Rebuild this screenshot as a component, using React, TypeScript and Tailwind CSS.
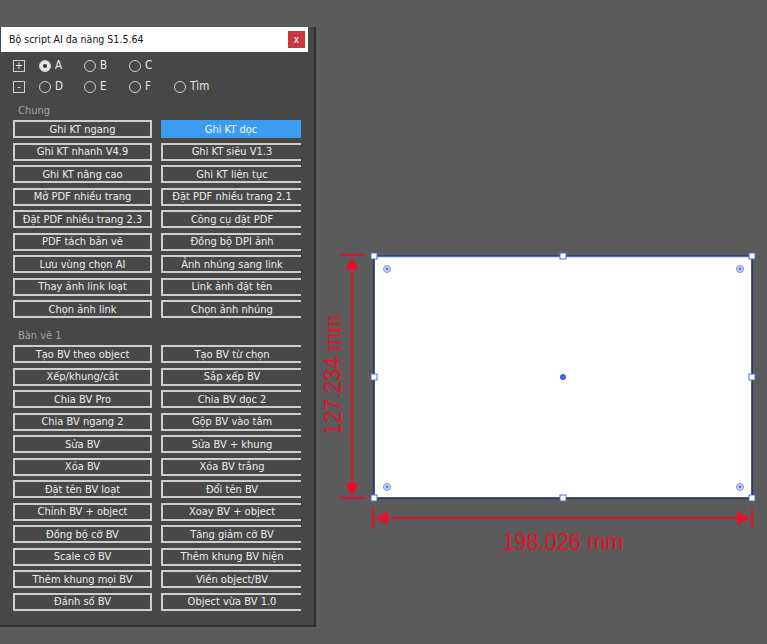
import React from 'react';

const chung = [
  ['Ghi KT ngang', 'Ghi KT dọc'],
  ['Ghi KT nhanh V4.9', 'Ghi KT siêu V1.3'],
  ['Ghi KT nâng cao', 'Ghi KT liên tục'],
  ['Mở PDF nhiều trang', 'Đặt PDF nhiều trang 2.1'],
  ['Đặt PDF nhiều trang 2.3', 'Công cụ đặt PDF'],
  ['PDF tách bản vẽ', 'Đồng bộ DPI ảnh'],
  ['Lưu vùng chọn AI', 'Ảnh nhúng sang link'],
  ['Thay ảnh link loạt', 'Link ảnh đặt tên'],
  ['Chọn ảnh link', 'Chọn ảnh nhúng'],
];

const banVe = [
  ['Tạo BV theo object', 'Tạo BV từ chọn'],
  ['Xếp/khung/cắt', 'Sắp xếp BV'],
  ['Chia BV Pro', 'Chia BV dọc 2'],
  ['Chia BV ngang 2', 'Gộp BV vào tâm'],
  ['Sửa BV', 'Sửa BV + khung'],
  ['Xóa BV', 'Xóa BV trắng'],
  ['Đặt tên BV loạt', 'Đổi tên BV'],
  ['Chỉnh BV + object', 'Xoay BV + object'],
  ['Đồng bộ cỡ BV', 'Tăng giảm cỡ BV'],
  ['Scale cỡ BV', 'Thêm khung BV hiện'],
  ['Thêm khung mọi BV', 'Viền object/BV'],
  ['Đánh số BV', 'Object vừa BV 1.0'],
];

const Radio = ({ label, checked }: { label: string; checked?: boolean }) => (
  <div className="flex items-center gap-[4px] w-[45px]">
    <span
      className={`w-[12px] h-[12px] rounded-full border border-[#cfcfcf] flex items-center justify-center ${
        checked ? 'bg-[#e6e6e6]' : ''
      }`}
    >
      {checked && <span className="w-[4px] h-[4px] rounded-full bg-[#333]" />}
    </span>
    <span className="text-[11.5px] leading-none text-[#e8e8e8]">{label}</span>
  </div>
);

const Btn = ({ label, active, right }: { label: string; active?: boolean; right?: boolean }) => (
  <div
    className={`h-[18px] flex items-center justify-center text-[11px] leading-none whitespace-nowrap ${
      active
        ? 'bg-[#3c9cf2] text-[#f4f8ff]'
        : `border-2 border-[#cdcdcd] bg-[#484848] text-[#ececec] ${right ? 'border-r-0' : ''}`
    }`}
  >
    {label}
  </div>
);

const Section = ({ title, rows, activeIdx }: { title: string; rows: string[][]; activeIdx?: number }) => (
  <div>
    <div className="text-[11px] leading-none text-[#a3a3a3] pl-[5px] h-[14px] flex items-center">{title}</div>
    <div className="grid grid-cols-[139px_140px] gap-x-[9px] gap-y-[4.5px] mt-[3px]">
      {rows.map(([a, b], i) => (
        <React.Fragment key={i}>
          <Btn label={a} />
          <Btn label={b} right active={i === activeIdx && activeIdx !== undefined} />
        </React.Fragment>
      ))}
    </div>
  </div>
);

const Canvas = () => {
  const red = '#e2132a';
  const blue = '#4a6fd6';
  const handles = [
    [374, 256], [563, 256], [752, 256],
    [374, 377], [752, 377],
    [374, 498], [563, 498], [752, 498],
  ];
  const points = [
    [387, 269], [740, 269], [387, 487], [740, 487],
  ];
  return (
    <svg className="absolute left-0 top-0" width={767} height={644} viewBox="0 0 767 644">
      <rect x={374} y={256} width={378} height={242} fill="#ffffff" stroke="#25305e" strokeWidth={1.6} />
      <line x1={374} y1={256.5} x2={752} y2={256.5} stroke={blue} strokeWidth={1.6} />
      {points.map(([x, y], i) => (
        <g key={i}>
          <circle cx={x} cy={y} r={3.5} fill="#d3daf4" stroke="#7d8fd6" strokeWidth={1} />
          <circle cx={x} cy={y} r={1.4} fill="#5d74cf" />
        </g>
      ))}
      <circle cx={563} cy={377} r={3} fill="#3e68de" />
      {handles.map(([x, y], i) => (
        <rect key={i} x={x - 3} y={y - 3} width={6} height={6} fill="#ffffff" stroke={blue} strokeWidth={1} />
      ))}

      {/* vertical dimension */}
      <line x1={340} y1={255} x2={365} y2={255} stroke={red} strokeWidth={2} />
      <line x1={340} y1={498} x2={365} y2={498} stroke={red} strokeWidth={2} />
      <line x1={352} y1={262} x2={352} y2={492} stroke={red} strokeWidth={2} />
      <polygon points="352,257 345,270 359,270" fill={red} />
      <polygon points="352,496 345,483 359,483" fill={red} />
      <text
        x={0}
        y={0}
        transform="translate(341 375) rotate(-90)"
        textAnchor="middle"
        fill={red}
        fontSize={24}
        textLength={120}
        lengthAdjust="spacingAndGlyphs"
        fontFamily="'Liberation Sans', Arial, sans-serif"
      >
        127.234 mm
      </text>

      {/* horizontal dimension */}
      <line x1={373} y1={508} x2={373} y2={529} stroke={red} strokeWidth={2} />
      <line x1={752} y1={508} x2={752} y2={529} stroke={red} strokeWidth={2} />
      <line x1={380} y1={518} x2={745} y2={518} stroke={red} strokeWidth={2} />
      <polygon points="375,518 388,511 388,525" fill={red} />
      <polygon points="750,518 737,511 737,525" fill={red} />
      <text
        x={563}
        y={550}
        textAnchor="middle"
        fill={red}
        fontSize={24}
        textLength={121}
        lengthAdjust="spacingAndGlyphs"
        fontFamily="'Liberation Sans', Arial, sans-serif"
      >
        198.026 mm
      </text>
    </svg>
  );
};

export default function App() {
  return (
    <div className="relative w-[767px] h-[644px] bg-[#5b5b5b] overflow-hidden">
      <Canvas />
      <div
        className="relative pt-[27px]"
        style={{ fontFamily: "'DejaVu Sans Condensed', 'DejaVu Sans', sans-serif", fontStretch: 'condensed' }}
      >
        <div className="w-[316px] h-[600px] bg-[#474747] border-r-2 border-b-2 border-[#303030] flex flex-col">
          <div className="w-[307px] h-[25px] ml-[1px] bg-white flex items-center justify-between pl-[8px] pr-[3px]">
            <span className="text-[10.5px] text-[#111]">Bộ script AI đa năng S1.5.64</span>
            <span className="w-[17px] h-[17px] bg-[#c8383c] flex items-center justify-center text-[10px] leading-none text-white">
              x
            </span>
          </div>
          <div className="pl-[13px] pt-[7px]">
            <div className="flex flex-col gap-[8px]">
              <div className="flex items-center h-[13px]">
                <span className="w-[12px] h-[12px] border border-[#d0d0d0] flex items-center justify-center text-[11px] leading-none text-[#e6e6e6] mr-[14px]">
                  +
                </span>
                <Radio label="A" checked />
                <Radio label="B" />
                <Radio label="C" />
              </div>
              <div className="flex items-center h-[13px]">
                <span className="w-[12px] h-[12px] border border-[#d0d0d0] flex items-center justify-center text-[11px] leading-none text-[#e6e6e6] mr-[14px]">
                  -
                </span>
                <Radio label="D" />
                <Radio label="E" />
                <Radio label="F" />
                <Radio label="Tìm" />
              </div>
            </div>
            <div className="mt-[10px]">
              <Section title="Chung" rows={chung} activeIdx={0} />
            </div>
            <div className="mt-[10px]">
              <Section title="Bàn vẽ 1" rows={banVe} />
            </div>
          </div>
        </div>
      </div>
    </div>
  );
}
